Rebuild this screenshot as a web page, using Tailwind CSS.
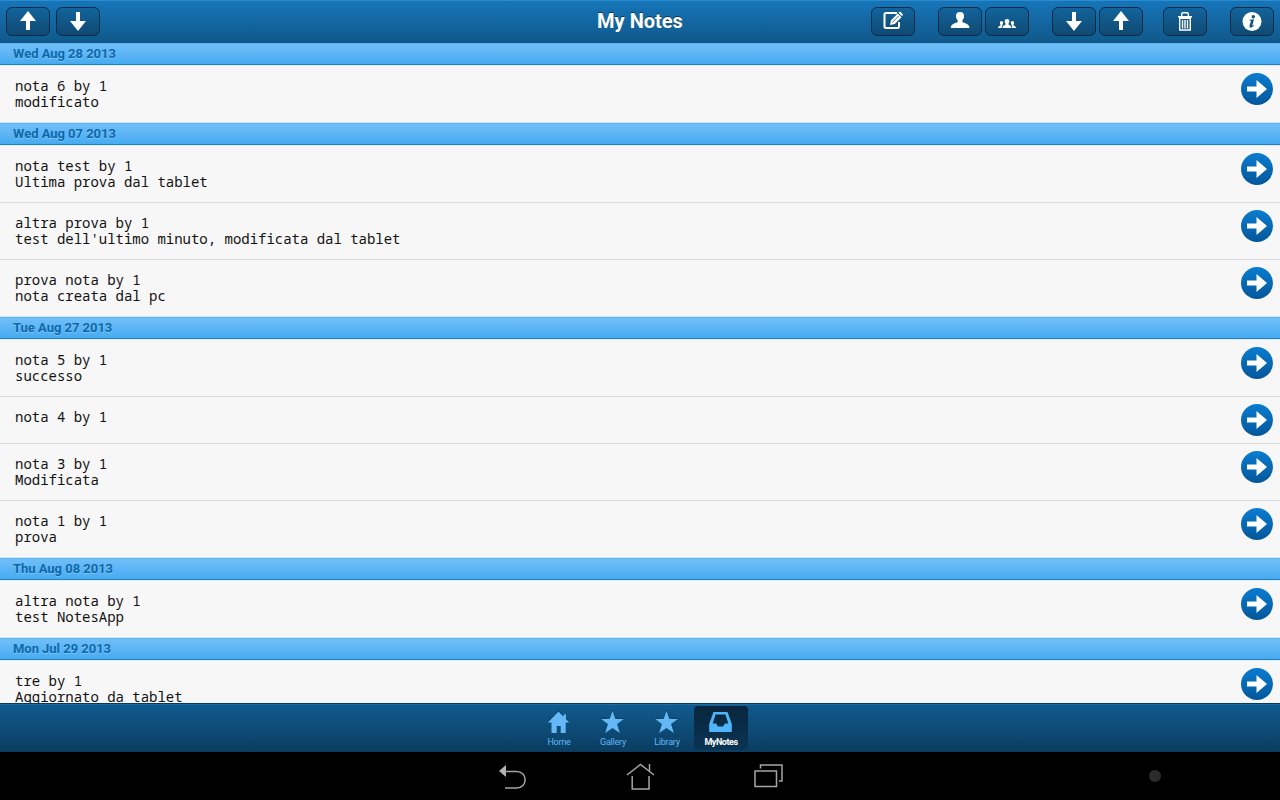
<!DOCTYPE html>
<html lang="it">
<head>
<meta charset="utf-8">
<title>My Notes</title>
<script src="https://cdn.jsdelivr.net/npm/@tailwindcss/browser@4"></script>
</head>
<body class="w-[1280px] h-[800px] overflow-hidden bg-black font-['Roboto',sans-serif]">
<svg class="absolute h-0 w-0">
  <defs>
    <linearGradient id="disc" x1="0" y1="0" x2="0" y2="1"><stop offset="0" stop-color="#0a7cd0"/><stop offset="1" stop-color="#04579a"/></linearGradient>
    <symbol id="up" viewBox="0 0 44 29"><path fill="#fff" d="M22 4 30 14H24V23H20V14H14Z"/></symbol>
    <symbol id="down" viewBox="0 0 44 29"><path fill="#fff" d="M20 5H24V14H30L22 24 14 14H20Z"/></symbol>
    <symbol id="star" viewBox="0 0 24 24"><path d="M11.500 .8 14.300 8.700 22.800 8.900 16.100 14.100 18.900 23 11.500 18 4.100 23 6.900 14.100.2 8.900 8.700 8.700Z"/></symbol>
  </defs>
</svg>
<div class="flex h-full flex-col">
  <header class="grid h-[43px] shrink-0 grid-cols-[1fr_auto_1fr] items-center border-t border-[#2a8bd0] bg-linear-to-b from-[#1676b9] to-[#10588a] px-[6px] pb-[2px]">
    <div class="flex gap-[6px]">
      <button class="h-[29px] w-[44px] rounded-[6px] border border-[#082c4a] bg-linear-to-b from-[#12649c] to-[#0f4a73]"><svg class="-m-px h-[29px] w-[44px]"><use href="#up"/></svg></button>
      <button class="h-[29px] w-[44px] rounded-[6px] border border-[#082c4a] bg-linear-to-b from-[#12649c] to-[#0f4a73]"><svg class="-m-px h-[29px] w-[44px]"><use href="#down"/></svg></button>
    </div>
    <h1 class="text-[20px] leading-[26px] font-bold text-white [text-shadow:0_-1px_0_rgba(0,0,0,.5)]">My Notes</h1>
    <div class="flex justify-end">
      <button class="h-[29px] w-[44px] rounded-[6px] border border-[#082c4a] bg-linear-to-b from-[#12649c] to-[#0f4a73]"><svg class="-m-px h-[29px] w-[44px]" viewBox="0 0 44 29"><path fill="none" stroke="#fff" stroke-width="2" d="M26 6H15Q13.500 6 13.500 7.500V19.500Q13.500 21 15 21H26.500Q28 21 28 19.500V15"/><path fill="#fff" d="M19 18 20 13.200 26.700 6.500 30.500 10.300 23.800 17ZM27.500 5.800 28.200 5.100Q29 4.500 29.700 5.100L31.500 6.900Q32.100 7.600 31.500 8.400L30.900 9.200Z"/><path stroke="#125180" stroke-width=".8" d="M21.300 15.500 27.600 9"/></svg></button>
      <button class="ml-[23px] h-[29px] w-[44px] rounded-[6px] border border-[#082c4a] bg-linear-to-b from-[#12649c] to-[#0f4a73]"><svg class="-m-px h-[29px] w-[44px]" viewBox="0 0 44 29"><path fill="#fff" d="M22 5C24.700 5 26.200 6.500 26 9.200 25.900 11.300 25.300 12.200 24.400 13.200V15C26 16.200 31.500 16.600 31.500 21H12.800C12.800 16.600 18 16.200 19.700 15V13.200C18.700 12.200 18.100 11.300 18 9.200 17.800 6.500 19.300 5 22 5Z"/></svg></button>
      <button class="ml-[3px] h-[29px] w-[44px] rounded-[6px] border border-[#082c4a] bg-linear-to-b from-[#12649c] to-[#0f4a73]"><svg class="-m-px h-[29px] w-[44px]" viewBox="0 0 44 29"><g fill="#fff"><path d="M22 12C23.800 12 24.500 13 24.400 14.300 24.300 15.500 24 16 23.500 16.600V17.500C24 18.200 26.500 18.300 26.500 21H17.500C17.500 18.300 20 18.200 20.500 17.500V16.600C20 16 19.700 15.500 19.600 14.300 19.500 13 20.200 12 22 12Z"/><path d="M16.500 14C17.800 14 18.300 15 18.100 16.200 18 17 17.700 17.500 17.300 18V18.500Q16.600 19.500 16.700 21H13C13 18.800 15 18.900 15.600 18.400V17.900C15.100 17.400 15 17 14.900 16.200 14.700 15 15.300 14 16.500 14ZM27.500 14C26.200 14 25.700 15 25.900 16.200 26 17 26.300 17.500 26.700 18V18.500Q27.400 19.500 27.300 21H31C31 18.800 29 18.900 28.400 18.400V17.900C28.900 17.400 29 17 29.100 16.200 29.300 15 28.700 14 27.500 14Z"/></g></svg></button>
      <button class="ml-[23px] h-[29px] w-[44px] rounded-[6px] border border-[#082c4a] bg-linear-to-b from-[#12649c] to-[#0f4a73]"><svg class="-m-px h-[29px] w-[44px]"><use href="#down"/></svg></button>
      <button class="ml-[3px] h-[29px] w-[44px] rounded-[6px] border border-[#082c4a] bg-linear-to-b from-[#12649c] to-[#0f4a73]"><svg class="-m-px h-[29px] w-[44px]"><use href="#up"/></svg></button>
      <button class="ml-[20px] h-[29px] w-[44px] rounded-[6px] border border-[#082c4a] bg-linear-to-b from-[#12649c] to-[#0f4a73]"><svg class="-m-px h-[29px] w-[44px]" viewBox="0 0 44 29"><path fill="none" stroke="#fff" stroke-width="1.400" d="M18.700 9V7Q18.700 5.700 20 5.700H24Q25.300 5.700 25.300 7V9M15 9.700H29M16.700 11V23H27.300V11M16 11.200H28M19.500 13V21.500M22 13V21.500M24.500 13V21.500"/></svg></button>
      <button class="ml-[23px] h-[29px] w-[44px] rounded-[6px] border border-[#082c4a] bg-linear-to-b from-[#12649c] to-[#0f4a73]"><svg class="-m-px h-[29px] w-[44px]" viewBox="0 0 44 29"><circle cx="22" cy="14.500" r="9.500" fill="#fff"/><g fill="#12507d"><circle cx="23.300" cy="9.800" r="1.700"/><path d="M19.500 12.800 24 12.300 22.300 18.500C22.200 19 22.700 18.700 23.700 17.800L24.100 18.200C22.800 20 21.600 20.700 20.500 20.600 19.500 20.500 19.300 19.600 19.600 18.700L20.900 14C21 13.500 20.500 13.500 19.400 13.500Z"/></g></svg></button>
    </div>
  </header>
  <main id="list" class="min-h-0 flex-1 overflow-hidden bg-[#f7f7f7]"></main>
  <nav class="flex h-[49px] shrink-0 justify-center border-t border-[#08395e] bg-linear-to-b from-[#105b8f] to-[#0b3d61] pt-[2px] text-[#63b8f5] shadow-[inset_0_1px_0_#1a6ca5]">
    <div class="flex h-[44px] w-[54px] flex-col items-center rounded-[4px]"><svg class="mt-[4px] h-[24px] w-[24px]" viewBox="0 0 24 24"><path fill="#093455" d="M11.500 .5 22.500 11.500H.5Z"/><path fill="#63b8f5" d="M11.500 1.500 16.500 6.500V4.500H19V9L22.300 12.500H18.700V23H13.700V16H9.700V23H4.500V12.500H.7Z"/></svg><span class="mt-[2px] text-[9px] leading-[12px] tracking-[-.25px]">Home</span></div>
    <div class="flex h-[44px] w-[54px] flex-col items-center rounded-[4px]"><svg class="mt-[4px] h-[24px] w-[24px]"><use href="#star" y="-1" fill="#093455"/><use href="#star" fill="#63b8f5"/></svg><span class="mt-[2px] text-[9px] leading-[12px] tracking-[-.25px]">Gallery</span></div>
    <div class="flex h-[44px] w-[54px] flex-col items-center rounded-[4px]"><svg class="mt-[4px] h-[24px] w-[24px]"><use href="#star" y="-1" fill="#093455"/><use href="#star" fill="#63b8f5"/></svg><span class="mt-[2px] text-[9px] leading-[12px] tracking-[-.25px]">Library</span></div>
    <div class="flex h-[44px] w-[54px] flex-col items-center rounded-[4px] bg-linear-to-b from-[#08263d] to-[#0a3454]"><svg class="mt-[4px] h-[24px] w-[24px]" viewBox="0 0 24 24"><path fill="#50b4fa" fill-rule="evenodd" d="M4.500 2H18.500L22.800 14V22H.2V14ZM6.500 4.500 3.700 13.500H7L9 16.500H14L16 13.500H19.300L16.500 4.500Z"/></svg><span class="mt-[2px] text-[9px] leading-[12px] font-bold tracking-[-.45px] text-white">MyNotes</span></div>
  </nav>
  <footer class="grid h-[48px] shrink-0 grid-cols-[496px_128px_128px_397px_1fr] items-center bg-black">
    <span></span>
    <svg class="h-[32px] w-[32px]" viewBox="0 2 32 32"><path fill="#b4b4b4" d="M3 13 10 7V19Z"/><path fill="none" stroke="#a5a5a5" stroke-width="1.500" d="M9 13.500H20.500C32 13.500 32 30 20.500 30H9"/></svg>
    <svg class="h-[32px] w-[32px]" viewBox="0 2 32 32"><g fill="none" stroke="#a5a5a5" stroke-width="1.500"><path d="M3 17 16.500 6.500 30 17M25.500 13V6M8.200 18V31H25V18"/></g></svg>
    <svg class="h-[32px] w-[32px]" viewBox="0 2 32 32"><g fill="none" stroke="#a5a5a5" stroke-width="1.500"><path d="M3 13H24.500V28.500H3ZM8.500 10.500V7H30V23H27"/></g></svg>
    <span class="h-[12px] w-[12px] rounded-full bg-[#2c2c2c]"></span>
  </footer>
</div>
<script>
const groups = [
  ['Wed Aug 28 2013', ['nota 6 by 1', 'modificato']],
  ['Wed Aug 07 2013', ['nota test by 1', 'Ultima prova dal tablet'], ['altra prova by 1', "test dell'ultimo minuto, modificata dal tablet"], ['prova nota by 1', 'nota creata dal pc']],
  ['Tue Aug 27 2013', ['nota 5 by 1', 'successo'], ['nota 4 by 1', ''], ['nota 3 by 1', 'Modificata'], ['nota 1 by 1', 'prova']],
  ['Thu Aug 08 2013', ['altra nota by 1', 'test NotesApp']],
  ['Mon Jul 29 2013', ['tre by 1', 'Aggiornato da tablet']]
];
document.getElementById('list').innerHTML = groups.map(([date, ...notes]) => `
<section>
  <h2 class="h-[22px] border-t border-b border-t-[#5fb2ee] border-b-[#2a80bd] bg-linear-to-b from-[#70bff8] to-[#45abf1] pl-[13px] text-[13px] leading-[20px] font-bold tracking-[-.03px] text-[#0c68aa] [text-shadow:0_1px_0_rgba(255,255,255,.25)]">${date}</h2>
  <div class="h-px bg-[#d5effd]"></div>
  ${notes.map(([a, b]) => `<article class="flex justify-between border-b border-[#dcdcdc] pr-[7px] pl-[15px] last:border-[#cdeafa] ${b ? 'h-[57px]' : 'h-[47px]'}">
    <div class="pt-[12px] font-['Droid_Sans_Mono','Noto_Sans_Mono','DejaVu_Sans_Mono',monospace] text-[14px] leading-[16px] tracking-[-.02px] text-[#111]"><p>${a}</p><p>${b}</p></div>
    <svg class="mt-[7px] h-[32px] w-[32px]" viewBox="0 0 32 32"><circle cx="16" cy="16" r="16" fill="url(#disc)"/><path fill="#fff" d="M6 13.500H15.500V7L26 16 15.500 25V18.500H6Z"/></svg>
  </article>`).join('')}
</section>`).join('');
</script>
</body>
</html>
